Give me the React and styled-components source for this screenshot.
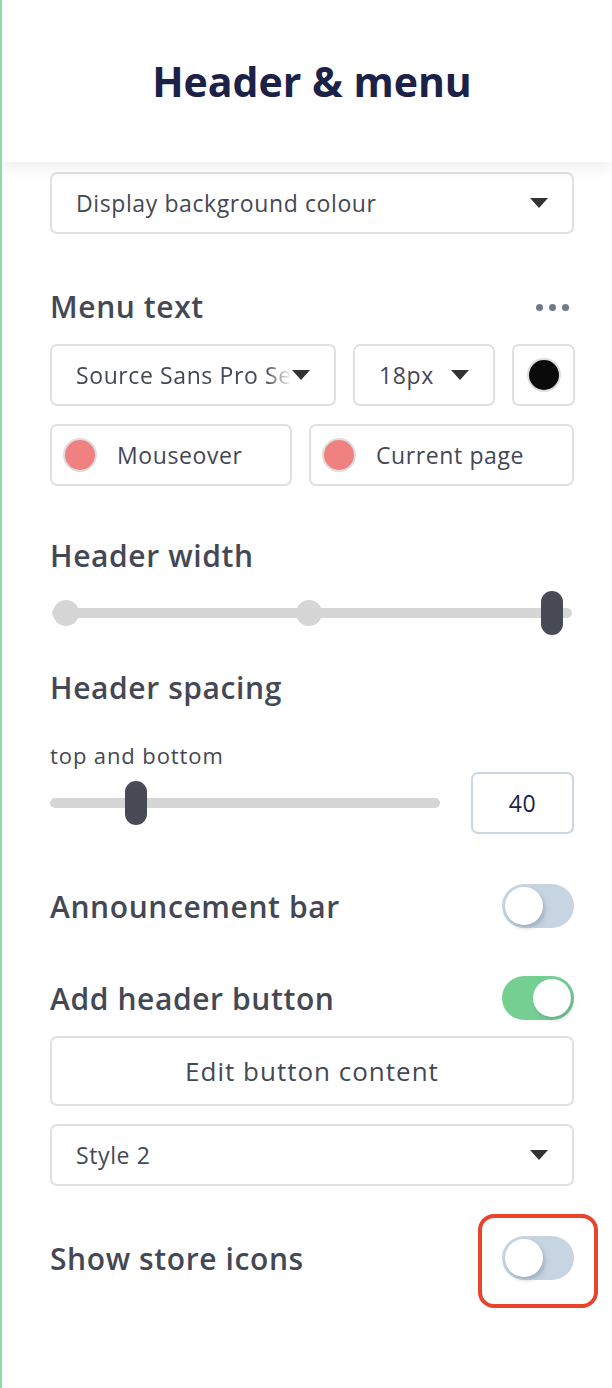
import React from 'react';
import styled, { createGlobalStyle } from 'styled-components';

const GlobalStyle = createGlobalStyle`
  html, body {
    margin: 0;
    padding: 0;
    background: #ffffff;
  }
  body {
    font-family: "Open Sans", Lato, sans-serif;
    color: #444854;
  }
`;

const Panel = styled.div`
  width: 612px;
  height: 1388px;
  box-sizing: border-box;
  border-left: 2px solid #8fd9ab;
  background: #ffffff;
  overflow: hidden;
`;

const Header = styled.header`
  height: 162px;
  display: flex;
  align-items: center;
  justify-content: center;
  background: #ffffff;
  box-shadow: 0 6px 14px rgba(0, 0, 0, 0.07);
  position: relative;
  z-index: 1;
`;

const Title = styled.h1`
  margin: 0 0 0 10px;
  font-size: 41px;
  font-weight: 700;
  color: #1b2147;
`;

const Content = styled.div`
  padding: 10px 38px 0 48px;
  display: flex;
  flex-direction: column;
`;

const Box = styled.div`
  box-sizing: border-box;
  height: ${(p) => p.$h || 62}px;
  border: 2px solid ${(p) => p.$border || '#e0e0e0'};
  border-radius: 7px;
  background: #ffffff;
  display: flex;
  align-items: center;
  position: relative;
  font-size: 23px;
  letter-spacing: 0.6px;
  color: #444854;
  min-width: 0;
`;

const Select = styled(Box)`
  padding: 0 24px 0 24px;
  justify-content: space-between;
  flex: ${(p) => (p.$w ? `0 0 ${p.$w}px` : '1 1 auto')};
  margin-top: ${(p) => p.$mt || 0}px;
`;

const SelectText = styled.span`
  white-space: nowrap;
  overflow: hidden;
  min-width: 0;
  flex: 1 1 auto;
  ${(p) =>
    p.$fade &&
    `-webkit-mask-image: linear-gradient(to right, #000 88%, transparent 100%);
     mask-image: linear-gradient(to right, #000 88%, transparent 100%);`}
`;

const Caret = styled.span`
  flex: 0 0 auto;
  width: 0;
  height: 0;
  border-left: 9px solid transparent;
  border-right: 9px solid transparent;
  border-top: 10px solid #333333;
`;

const Heading = styled.div`
  display: flex;
  align-items: center;
  justify-content: space-between;
  font-size: 30px;
  font-weight: 600;
  letter-spacing: 0.6px;
  line-height: 34px;
  color: #444854;
  margin-top: ${(p) => p.$mt || 0}px;
`;

const Dots = styled.span`
  display: flex;
  gap: 6px;
  margin-right: 5px;

  i {
    width: 7px;
    height: 7px;
    border-radius: 50%;
    background: #6f7b8c;
  }
`;

const Row = styled.div`
  display: flex;
  gap: 17px;
  margin-top: ${(p) => p.$mt || 0}px;
`;

const Swatch = styled(Box)`
  flex: 0 0 63px;
  justify-content: center;
`;

const Dot = styled.span`
  width: 34px;
  height: 34px;
  box-sizing: border-box;
  border-radius: 50%;
  background: ${(p) => p.$c};
  border: 2px solid #dddddd;
  flex: 0 0 auto;
`;

const ColorPick = styled(Box)`
  flex: ${(p) => p.$grow};
  padding-left: 11px;
  gap: 20px;
`;

const Slider = styled.div`
  position: relative;
  height: 44px;
  flex: ${(p) => (p.$w ? `0 0 ${p.$w}px` : '1 1 auto')};
  margin-top: ${(p) => p.$mt || 0}px;
  margin-left: ${(p) => p.$ml || 0}px;
  margin-right: ${(p) => p.$mr || 0}px;
`;

const Track = styled.div`
  position: absolute;
  left: 0;
  right: 0;
  top: 17px;
  height: 10px;
  border-radius: 5px;
  background: #d6d6d6;
`;

const Stop = styled.span`
  position: absolute;
  top: 9px;
  width: 26px;
  height: 26px;
  margin-left: -13px;
  border-radius: 50%;
  background: #d6d6d6;
`;

const Thumb = styled.span`
  position: absolute;
  top: 0;
  width: 22px;
  height: 44px;
  margin-left: -11px;
  border-radius: 11px;
  background: #484b55;
`;

const SubLabel = styled.div`
  font-size: 22px;
  letter-spacing: 0.9px;
  line-height: 24px;
  color: #444854;
  margin-top: ${(p) => p.$mt || 0}px;
`;

const SliderRow = styled.div`
  display: flex;
  align-items: center;
  justify-content: space-between;
  margin-top: ${(p) => p.$mt || 0}px;
`;

const NumberBox = styled(Box)`
  width: 103px;
  justify-content: center;
  color: #1b2147;
`;

const ToggleRow = styled.div`
  display: flex;
  align-items: center;
  justify-content: space-between;
  margin-top: ${(p) => p.$mt || 0}px;
  font-size: 30px;
  font-weight: 600;
  letter-spacing: 0.6px;
  color: #444854;
`;

const ToggleWrap = styled.div`
  position: relative;
  display: flex;
`;

const Toggle = styled.span`
  width: 72px;
  height: 44px;
  border-radius: 22px;
  background: ${(p) => (p.$on ? '#76cf92' : '#c6d5e1')};
  display: flex;
  align-items: center;
  justify-content: ${(p) => (p.$on ? 'flex-end' : 'flex-start')};
  padding: 0 3px;
  box-sizing: border-box;

  &::before {
    content: '';
    width: 38px;
    height: 38px;
    border-radius: 50%;
    background: #ffffff;
    box-shadow: 2px 3px 4px rgba(90, 110, 130, 0.35);
  }
`;

const Highlight = styled.span`
  position: absolute;
  left: -24px;
  right: -24px;
  top: -22px;
  bottom: -28px;
  border: 4px solid #e8432b;
  border-radius: 16px;
  pointer-events: none;
`;

const WideButton = styled(Box)`
  justify-content: center;
  font-size: 26px;
  letter-spacing: 1px;
  margin-top: ${(p) => p.$mt || 0}px;
`;

export default function App() {
  return (
    <>
      <GlobalStyle />
      <Panel>
        <Header>
          <Title>Header &amp; menu</Title>
        </Header>
        <Content>
          <Select>
            <SelectText>Display background colour</SelectText>
            <Caret />
          </Select>

          <Heading $mt={56}>
            Menu text
            <Dots>
              <i />
              <i />
              <i />
            </Dots>
          </Heading>
          <Row $mt={20}>
            <Select $w={286}>
              <SelectText $fade>Source Sans Pro Semibold</SelectText>
              <Caret />
            </Select>
            <Select $w={142}>
              <SelectText>18px</SelectText>
              <Caret />
            </Select>
            <Swatch>
              <Dot $c="#0a0a0a" />
            </Swatch>
          </Row>
          <Row $mt={18}>
            <ColorPick $grow="0 0 242px">
              <Dot $c="#ef8181" />
              Mouseover
            </ColorPick>
            <ColorPick $grow="1 1 auto">
              <Dot $c="#ef8181" />
              Current page
            </ColorPick>
          </Row>

          <Heading $mt={53}>Header width</Heading>
          <Slider $mt={18} $ml={16} $mr={22}>
            <Track style={{ left: -14, right: -20 }} />
            <Stop style={{ left: '0%' }} />
            <Stop style={{ left: '50%' }} />
            <Thumb style={{ left: '100%' }} />
          </Slider>

          <Heading $mt={36}>Header spacing</Heading>
          <SubLabel $mt={38}>top and bottom</SubLabel>
          <SliderRow $mt={5}>
            <Slider $w={390}>
              <Track />
              <Thumb style={{ left: '22%' }} />
            </Slider>
            <NumberBox $border="#cad7e2">40</NumberBox>
          </SliderRow>

          <ToggleRow $mt={50}>
            Announcement bar
            <ToggleWrap>
              <Toggle />
            </ToggleWrap>
          </ToggleRow>
          <ToggleRow $mt={48}>
            Add header button
            <ToggleWrap>
              <Toggle $on />
            </ToggleWrap>
          </ToggleRow>
          <WideButton $h={70} $mt={16}>
            Edit button content
          </WideButton>
          <Select $mt={18}>
            <SelectText>Style 2</SelectText>
            <Caret />
          </Select>
          <ToggleRow $mt={50}>
            Show store icons
            <ToggleWrap>
              <Toggle />
              <Highlight />
            </ToggleWrap>
          </ToggleRow>
        </Content>
      </Panel>
    </>
  );
}
